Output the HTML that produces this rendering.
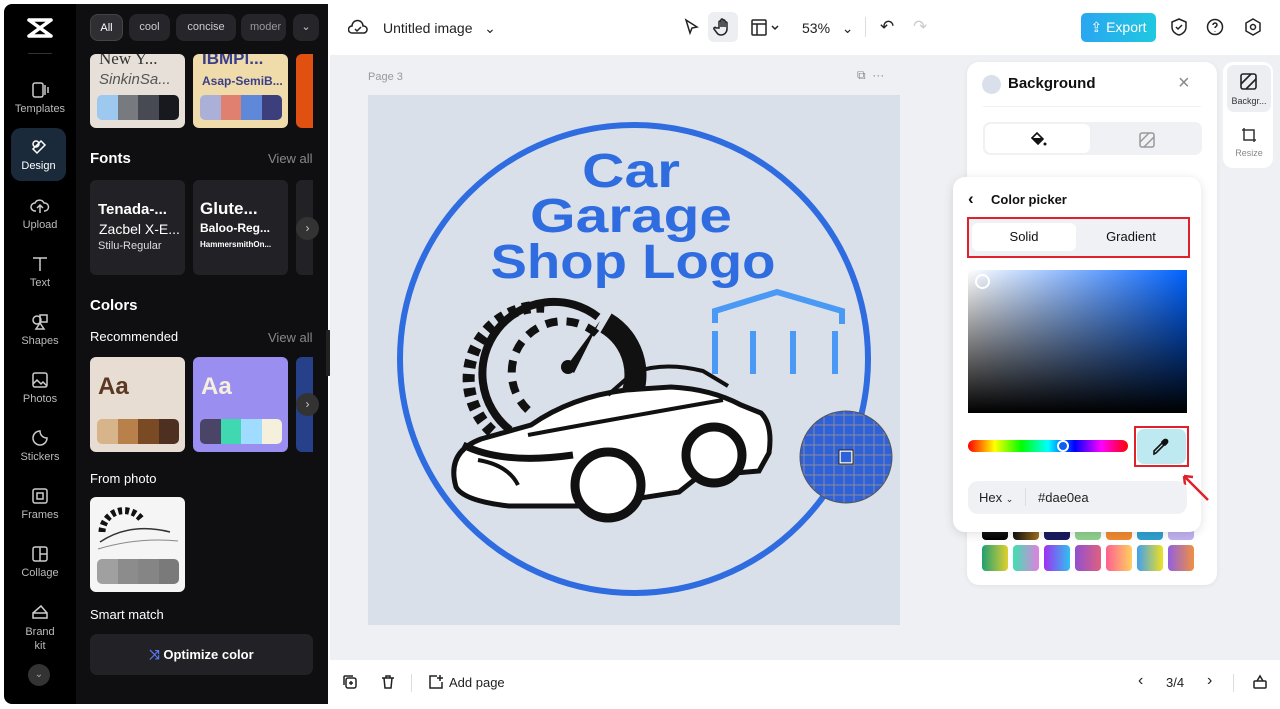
<!DOCTYPE html>
<html><head><meta charset="utf-8"><style>
*{box-sizing:border-box;margin:0;padding:0}
body{width:1280px;height:709px;overflow:hidden;background:#fff;font-family:"Liberation Sans",sans-serif;position:relative}
.abs{position:absolute;white-space:nowrap}
.rail{left:4px;top:4px;width:72px;height:700px;background:#000;border-radius:8px 0 0 8px}
.panel{left:76px;top:4px;width:252px;height:700px;background:#0f0f11}
.ri{position:absolute;left:0;width:72px;text-align:center;color:#bbb;font-size:11px}
.ri svg{display:block;margin:0 auto 3px}
.chip{position:absolute;top:14px;height:27px;border-radius:8px;background:#26262a;color:#ccc;font-size:11px;line-height:27px;text-align:center;overflow:hidden;white-space:nowrap}
.h{position:absolute;color:#fff;font-weight:bold;font-size:15px}
.va{position:absolute;color:#888;font-size:13px}
.card{position:absolute;border-radius:6px;overflow:hidden;white-space:nowrap}
.sw{position:absolute;height:25px;border-radius:5px;overflow:hidden;display:flex}
.sw i{flex:1}
.top{left:330px;top:0;width:950px;height:55px;background:#fff}
.canvasbg{left:330px;top:55px;width:950px;height:605px;background:#eef0f4}
.bot{left:330px;top:660px;width:950px;height:49px;background:#fff}
</style></head><body>
<div class="abs rail"></div>
<div class="abs panel"></div>
<svg class="abs" style="left:26px;top:17px" width="28" height="22" viewBox="0 0 28 22"><path d="M3 3l22 16M25 3L3 19M3 3h22M3 19h22" stroke="#fff" stroke-width="3.5" fill="none" stroke-linejoin="round" stroke-linecap="round"/></svg>
<div class="abs" style="left:28px;top:53px;width:24px;height:1px;background:#333"></div>
<div class="abs" style="left:4px;top:0;width:72px">
<div class="ri" style="top:80px"><svg width="20" height="20" viewBox="0 0 20 20" fill="none" stroke="#ccc" stroke-width="1.5"><rect x="3" y="3" width="10" height="14" rx="2"/><path d="M15 5v10M18 7v6"/></svg>Templates</div>
<div class="ri" style="top:128px;left:7px;width:55px;height:53px;background:#1b2a3a;border-radius:10px;color:#fff;padding-top:9px"><svg width="20" height="20" viewBox="0 0 20 20" fill="none" stroke="#fff" stroke-width="1.5"><circle cx="7" cy="7" r="3"/><path d="M12 4l4 4-8 8-4-4z"/></svg>Design</div>
<div class="ri" style="top:196px"><svg width="20" height="20" viewBox="0 0 20 20" fill="none" stroke="#ccc" stroke-width="1.5"><path d="M6 15H5a4 4 0 010-8 5 5 0 019 0 4 4 0 011 8h-1M10 17V9M7 12l3-3 3 3"/></svg>Upload</div>
<div class="ri" style="top:254px"><svg width="20" height="20" viewBox="0 0 20 20" fill="none" stroke="#ccc" stroke-width="1.5"><path d="M3 4h14M10 4v13"/></svg>Text</div>
<div class="ri" style="top:312px"><svg width="20" height="20" viewBox="0 0 20 20" fill="none" stroke="#ccc" stroke-width="1.5"><circle cx="7" cy="8" r="4"/><rect x="10" y="3" width="7" height="7"/><path d="M10 11l4 6H6z"/></svg>Shapes</div>
<div class="ri" style="top:370px"><svg width="20" height="20" viewBox="0 0 20 20" fill="none" stroke="#ccc" stroke-width="1.5"><rect x="3" y="3" width="14" height="14" rx="2"/><path d="M3 14l4-4 4 4 2-2 4 4"/></svg>Photos</div>
<div class="ri" style="top:428px"><svg width="20" height="20" viewBox="0 0 20 20" fill="none" stroke="#ccc" stroke-width="1.5"><path d="M17 10a7 7 0 11-7-7c0 4 3 7 7 7z"/></svg>Stickers</div>
<div class="ri" style="top:486px"><svg width="20" height="20" viewBox="0 0 20 20" fill="none" stroke="#ccc" stroke-width="1.5"><rect x="3" y="3" width="14" height="14" rx="2"/><rect x="7" y="7" width="6" height="6"/></svg>Frames</div>
<div class="ri" style="top:544px"><svg width="20" height="20" viewBox="0 0 20 20" fill="none" stroke="#ccc" stroke-width="1.5"><rect x="3" y="3" width="14" height="14" rx="2"/><path d="M10 3v14M10 10h7"/></svg>Collage</div>
<div class="ri" style="top:602px;line-height:14px"><svg width="20" height="20" viewBox="0 0 20 20" fill="none" stroke="#ccc" stroke-width="1.5"><path d="M3 11l8-7 6 7M3 11h14v5H3z"/></svg>Brand<br>kit</div>
<div style="position:absolute;left:24px;top:664px;width:22px;height:22px;border-radius:50%;background:#333;color:#aaa;font-size:10px;text-align:center;line-height:22px">⌄</div>
</div>
<div class="chip" style="left:90px;width:33px;background:#2e2e33;color:#fff;border:1px solid #444">All</div>
<div class="chip" style="left:129px;width:41px">cool</div>
<div class="chip" style="left:176px;width:60px">concise</div>
<div class="chip" style="left:241px;width:45px;text-align:left;padding-left:9px;color:#999">moder</div>
<div class="chip" style="left:293px;width:26px">⌄</div>
<div class="card" style="left:90px;top:54px;width:95px;height:74px;background:#e6e0d8"><div style="position:absolute;left:9px;top:-5px;font-family:'Liberation Serif';font-size:17px;color:#333">New Y...</div><div style="position:absolute;left:9px;top:17px;font-style:italic;font-size:15px;color:#555">SinkinSa...</div></div>
<div class="sw" style="left:97px;top:95px;width:82px"><i style="background:#9dc8f0"></i><i style="background:#777b80"></i><i style="background:#474a52"></i><i style="background:#17191e"></i></div>
<div class="card" style="left:193px;top:54px;width:95px;height:74px;background:#f0dcaa"><div style="position:absolute;left:9px;top:-5px;font-weight:bold;font-size:17px;color:#3a3f8a">IBMPl...</div><div style="position:absolute;left:9px;top:20px;font-weight:bold;font-size:12px;color:#3a3f8a">Asap-SemiB...</div></div>
<div class="sw" style="left:200px;top:95px;width:82px"><i style="background:#aab0d8"></i><i style="background:#e08070"></i><i style="background:#6088d8"></i><i style="background:#3c3f7c"></i></div>
<div class="card" style="left:296px;top:54px;width:17px;height:74px;background:#e05010;border-radius:6px 0 0 6px"></div>
<div class="h" style="left:90px;top:150px">Fonts</div><div class="va" style="left:268px;top:151px">View all</div>
<div class="card" style="left:90px;top:180px;width:95px;height:95px;background:#222226;color:#fff"><div style="position:absolute;left:8px;top:21px;font-weight:bold;font-size:15px">Tenada-...</div><div style="position:absolute;left:9px;top:41px;font-size:14px">Zacbel X-E...</div><div style="position:absolute;left:8px;top:60px;font-size:11px;color:#ddd">Stilu-Regular</div></div>
<div class="card" style="left:193px;top:180px;width:95px;height:95px;background:#222226;color:#fff"><div style="position:absolute;left:7px;top:19px;font-weight:bold;font-size:17px">Glute...</div><div style="position:absolute;left:7px;top:41px;font-weight:bold;font-size:12px">Baloo-Reg...</div><div style="position:absolute;left:7px;top:60px;font-size:8px;font-weight:bold">HammersmithOn...</div></div>
<div class="card" style="left:296px;top:180px;width:17px;height:95px;background:#222226;border-radius:6px 0 0 6px"></div>
<div class="abs" style="left:296px;top:217px;width:23px;height:23px;border-radius:50%;background:#333;color:#ccc;font-size:12px;text-align:center;line-height:23px">›</div>
<div class="h" style="left:90px;top:297px">Colors</div>
<div class="abs" style="left:90px;top:329px;color:#fff;font-size:13px">Recommended</div><div class="va" style="left:268px;top:330px">View all</div>
<div class="card" style="left:90px;top:357px;width:95px;height:95px;background:#e8ddd2"><div style="position:absolute;left:8px;top:16px;font-weight:bold;font-size:24px;color:#5a3822">Aa</div></div>
<div class="sw" style="left:97px;top:419px;width:82px"><i style="background:#d8b48a"></i><i style="background:#b8804a"></i><i style="background:#7a4a24"></i><i style="background:#4e3020"></i></div>
<div class="card" style="left:193px;top:357px;width:95px;height:95px;background:#9a8ef0"><div style="position:absolute;left:8px;top:16px;font-weight:bold;font-size:24px;color:#f5f0dc">Aa</div></div>
<div class="sw" style="left:200px;top:419px;width:82px"><i style="background:#4a4466"></i><i style="background:#40d8b0"></i><i style="background:#a0dcff"></i><i style="background:#f5f0dc"></i></div>
<div class="card" style="left:296px;top:357px;width:17px;height:95px;background:#26408a;border-radius:6px 0 0 6px"></div>
<div class="abs" style="left:296px;top:393px;width:23px;height:23px;border-radius:50%;background:#333;color:#ccc;font-size:12px;text-align:center;line-height:23px">›</div>
<div class="abs" style="left:90px;top:471px;color:#fff;font-size:13px">From photo</div>
<div class="card" style="left:90px;top:497px;width:95px;height:95px;background:#f5f5f5"><svg width="95" height="60" viewBox="0 0 95 60"><path d="M12 35a22 22 0 0140-12" stroke="#111" stroke-width="7" fill="none" stroke-dasharray="4 3"/><path d="M10 45q30-20 70-10" stroke="#333" stroke-width="1.5" fill="none"/><path d="M8 52q40-12 80-8" stroke="#888" stroke-width="1" fill="none"/></svg></div>
<div class="sw" style="left:97px;top:559px;width:82px"><i style="background:#a0a0a0"></i><i style="background:#8c8c8c"></i><i style="background:#858585"></i><i style="background:#7a7a7a"></i></div>
<div class="abs" style="left:90px;top:607px;color:#fff;font-size:13px">Smart match</div>
<div class="abs" style="left:90px;top:634px;width:223px;height:41px;background:#222226;border-radius:7px;color:#fff;font-size:13px;text-align:center;line-height:41px;font-weight:bold"><span style="color:#5a7af0">⤨</span> Optimize color</div>
<div class="abs" style="left:326px;top:330px;width:8px;height:46px;background:#222;border-radius:0 5px 5px 0"></div>
<div class="abs" style="left:0;top:704px;width:330px;height:5px;background:#fff"></div>

<div class="abs top"></div>
<svg class="abs" style="left:348px;top:18px" width="20" height="18" viewBox="0 0 20 18" fill="none" stroke="#222" stroke-width="1.5"><path d="M5 15H4a3.5 3.5 0 010-7 5.5 5.5 0 0111 0 3.5 3.5 0 011 7z"/><path d="M7 11l2 2 4-4"/></svg>
<div class="abs" style="left:383px;top:20px;font-size:14px;color:#222">Untitled image &nbsp;&nbsp;⌄</div>
<svg class="abs" style="left:682px;top:18px" width="18" height="18" viewBox="0 0 18 18" fill="none" stroke="#222" stroke-width="1.5"><path d="M4 2l11 7-5 1-2 5z"/></svg>
<div class="abs" style="left:708px;top:12px;width:30px;height:30px;background:#eceef1;border-radius:6px"></div>
<svg class="abs" style="left:713px;top:17px" width="20" height="20" viewBox="0 0 20 20" fill="none" stroke="#222" stroke-width="1.5"><path d="M6 11V5a1 1 0 012 0v5V3a1 1 0 012 0v7V4a1 1 0 012 0v6V6a1 1 0 012 0v6a6 6 0 01-6 6 5 5 0 01-4-2l-3-4a1 1 0 012-1z"/></svg>
<svg class="abs" style="left:751px;top:19px" width="30" height="18" viewBox="0 0 30 18" fill="none" stroke="#222" stroke-width="1.5"><rect x="1" y="1" width="14" height="15" rx="1"/><path d="M1 5h14M6 5v11M21 7l3 3 3-3"/></svg>
<div class="abs" style="left:802px;top:20px;font-size:14px;color:#222">53% &nbsp;&nbsp;⌄</div>
<div class="abs" style="left:865px;top:17px;width:1px;height:20px;background:#ddd"></div>
<div class="abs" style="left:880px;top:17px;font-size:17px;color:#222">↶</div>
<div class="abs" style="left:913px;top:17px;font-size:17px;color:#ccc">↷</div>
<div class="abs" style="left:1081px;top:13px;width:75px;height:29px;border-radius:5px;background:linear-gradient(90deg,#2aa6f0,#1fc8e0);color:#fff;font-size:14px;line-height:29px;text-align:center">⇪ Export</div>
<svg class="abs" style="left:1170px;top:18px" width="18" height="18" viewBox="0 0 18 18" fill="none" stroke="#222" stroke-width="1.5"><path d="M9 1l7 3v5c0 4-3 7-7 8-4-1-7-4-7-8V4z"/><path d="M6 9l2 2 4-4"/></svg>
<svg class="abs" style="left:1206px;top:18px" width="18" height="18" viewBox="0 0 18 18" fill="none" stroke="#222" stroke-width="1.5"><circle cx="9" cy="9" r="7.5"/><path d="M7 7a2 2 0 114 0c0 1.5-2 1.5-2 3M9 13v.5"/></svg>
<svg class="abs" style="left:1244px;top:18px" width="18" height="18" viewBox="0 0 18 18" fill="none" stroke="#222" stroke-width="1.5"><path d="M9 1l7 4v8l-7 4-7-4V5z"/><circle cx="9" cy="9" r="2.5"/></svg>

<div class="abs canvasbg"></div>
<div class="abs" style="left:368px;top:71px;font-size:11px;color:#999">Page 3</div>
<div class="abs" style="left:857px;top:68px;font-size:12px;color:#888">⧉ &nbsp;···</div>
<div class="abs" style="left:368px;top:95px;width:532px;height:530px;background:#dae0ea"></div>
<svg class="abs" style="left:368px;top:95px" width="532" height="530" viewBox="0 0 532 530">
<circle cx="266" cy="264" r="234" fill="none" stroke="#2f6ce0" stroke-width="6"/>
<g font-family="Liberation Sans" font-weight="bold" fill="#2f6ce0" text-anchor="middle">
<text x="263" y="92" font-size="48" textLength="98" lengthAdjust="spacingAndGlyphs">Car</text>
<text x="263" y="137" font-size="48" textLength="202" lengthAdjust="spacingAndGlyphs">Garage</text>
<text x="265" y="183" font-size="48" textLength="285" lengthAdjust="spacingAndGlyphs">Shop Logo</text>
</g>
<g fill="none" stroke="#4a9af5" stroke-width="6"><path d="M347 228V216l62-19 65 19v13"/><path d="M347 236v43M385 236v43M425 236v43M467 236v43"/></g>
<!-- gear -->
<path d="M135 345A72 72 0 0 1 180 212" fill="none" stroke="#111" stroke-width="12" stroke-dasharray="8 6"/>
<path d="M142 335A62 62 0 0 1 230 222" fill="none" stroke="#111" stroke-width="8"/>
<path d="M160 315A48 48 0 0 1 230 240" fill="none" stroke="#111" stroke-width="8" stroke-dasharray="12 9"/>
<path d="M238 228A60 60 0 0 1 258 312" fill="none" stroke="#111" stroke-width="22"/>
<path d="M198 272l34-46-26 52z" fill="#111"/><circle cx="200" cy="272" r="7" fill="#111"/>
<!-- car -->
<path d="M88 392q-10-35 25-48l50-14q40-28 95-35l45-3q40 2 70 18l20 8q12 12 8 40l-10 18-60 5-20 16-90 14-80 0q-45-5-53-19z" fill="#fff" stroke="#111" stroke-width="5"/>
<path d="M160 340q80-15 195-35" stroke="#111" stroke-width="4" fill="none"/>
<path d="M240 300l25-22q30-12 70-2l25 15" stroke="#111" stroke-width="4" fill="none"/>
<path d="M95 350q40 20 110 10" stroke="#111" stroke-width="7" fill="none"/>
<circle cx="240" cy="390" r="33" fill="#fff" stroke="#111" stroke-width="9"/>
<circle cx="346" cy="360" r="28" fill="#fff" stroke="#111" stroke-width="9"/>
<path d="M110 365q30 5 40 25" stroke="#111" stroke-width="4" fill="none"/>
</svg>
<svg class="abs" style="left:799px;top:410px" width="94" height="94" viewBox="0 0 94 94"><defs><clipPath id="c"><circle cx="47" cy="47" r="46"/></clipPath></defs><circle cx="47" cy="47" r="46" fill="#2f62d8"/><g clip-path="url(#c)" stroke="#8a8a9a" stroke-width="1"><path d="M5 0v94M15 0v94M25 0v94M35 0v94M45 0v94M55 0v94M65 0v94M75 0v94M85 0v94M0 5h94M0 15h94M0 25h94M0 35h94M0 45h94M0 55h94M0 65h94M0 75h94M0 85h94"/></g><circle cx="47" cy="47" r="46" fill="none" stroke="#555"/><rect x="41" y="41" width="12" height="12" fill="#2f62d8" stroke="#fff" stroke-width="1.5"/><rect x="40" y="40" width="14" height="14" fill="none" stroke="#222"/></svg>

<div class="abs" style="left:1223px;top:62px;width:50px;height:106px;background:#fff;border-radius:10px"></div>
<div class="abs" style="left:1227px;top:65px;width:44px;height:47px;background:#eceef1;border-radius:7px"></div>
<svg class="abs" style="left:1240px;top:73px" width="17" height="17" viewBox="0 0 17 17" fill="none" stroke="#222" stroke-width="1.6"><rect x="1" y="1" width="15" height="15" rx="2"/><path d="M1 11L11 1M6 16L16 6"/></svg>
<div class="abs" style="left:1227px;top:96px;width:44px;text-align:center;font-size:9px;color:#333">Backgr...</div>
<svg class="abs" style="left:1241px;top:127px" width="16" height="16" viewBox="0 0 16 16" fill="none" stroke="#333" stroke-width="1.5"><path d="M3 1v12h12M1 3h12v12"/></svg>
<div class="abs" style="left:1227px;top:148px;width:44px;text-align:center;font-size:9px;color:#888">Resize</div>

<div class="abs" style="left:967px;top:62px;width:250px;height:523px;background:#fff;border-radius:12px;box-shadow:0 1px 6px rgba(0,0,0,.06)"></div>
<div class="abs" style="left:982px;top:75px;width:19px;height:19px;border-radius:50%;background:#dae0ea"></div>
<div class="abs" style="left:1008px;top:75px;font-size:15px;font-weight:bold;color:#111">Background</div>
<div class="abs" style="left:1178px;top:72px;font-size:20px;color:#888">×</div>
<div class="abs" style="left:983px;top:106px;width:218px;height:1px;background:#f0f0f0"></div>
<div class="abs" style="left:983px;top:122px;width:219px;height:33px;background:#f0f1f4;border-radius:7px"></div>
<div class="abs" style="left:985px;top:124px;width:105px;height:29px;background:#fff;border-radius:6px"></div>
<svg class="abs" style="left:1029px;top:131px" width="18" height="16" viewBox="0 0 18 16"><path d="M3 7l5-5 6 6-5 5z" fill="none" stroke="#111" stroke-width="1.6"/><path d="M3 7h11l-5 5z" fill="#111"/><circle cx="16" cy="13" r="1.5" fill="#111"/></svg>
<svg class="abs" style="left:1139px;top:132px" width="16" height="16" viewBox="0 0 16 16" fill="none" stroke="#999" stroke-width="1.5"><rect x="1" y="1" width="14" height="14" rx="2"/><path d="M1 10L10 1M5 15L15 5"/></svg>
<div class="abs" style="left:982px;top:520px;display:flex;gap:5px">
<i style="width:26px;height:20px;border-radius:4px;background:linear-gradient(#333,#000)"></i><i style="width:26px;height:20px;border-radius:4px;background:linear-gradient(90deg,#111,#a07020)"></i><i style="width:26px;height:20px;border-radius:4px;background:#1a1a60"></i><i style="width:26px;height:20px;border-radius:4px;background:#90d090"></i><i style="width:26px;height:20px;border-radius:4px;background:#f08a30"></i><i style="width:26px;height:20px;border-radius:4px;background:#30a0d0"></i><i style="width:26px;height:20px;border-radius:4px;background:#c0b0f0"></i></div>
<div class="abs" style="left:982px;top:545px;display:flex;gap:5px">
<i style="width:26px;height:26px;border-radius:4px;background:linear-gradient(90deg,#20a070,#e0d030)"></i><i style="width:26px;height:26px;border-radius:4px;background:linear-gradient(90deg,#40e0b0,#e080e0)"></i><i style="width:26px;height:26px;border-radius:4px;background:linear-gradient(90deg,#a030f0,#30c0f0)"></i><i style="width:26px;height:26px;border-radius:4px;background:linear-gradient(90deg,#9050d0,#e06080)"></i><i style="width:26px;height:26px;border-radius:4px;background:linear-gradient(90deg,#ff6090,#ffd060)"></i><i style="width:26px;height:26px;border-radius:4px;background:linear-gradient(90deg,#40a0f0,#f0e020)"></i><i style="width:26px;height:26px;border-radius:4px;background:linear-gradient(90deg,#9060e0,#f09040)"></i></div>

<div class="abs" style="left:953px;top:177px;width:248px;height:355px;background:#fff;border-radius:12px;box-shadow:0 2px 10px rgba(0,0,0,.12)"></div>
<div class="abs" style="left:968px;top:189px;font-size:17px;color:#111;font-weight:bold">‹</div>
<div class="abs" style="left:991px;top:192px;font-size:13px;font-weight:bold;color:#111">Color picker</div>
<div class="abs" style="left:968px;top:219px;width:220px;height:38px;background:#f0f1f4"></div>
<div class="abs" style="left:972px;top:223px;width:104px;height:28px;background:#fff;border-radius:6px;text-align:center;line-height:28px;font-size:13px;color:#111">Solid</div>
<div class="abs" style="left:1078px;top:223px;width:106px;height:28px;text-align:center;line-height:28px;font-size:13px;color:#111">Gradient</div>
<div class="abs" style="left:967px;top:217px;width:223px;height:41px;border:2px solid #e0202a"></div>
<div class="abs" style="left:968px;top:270px;width:219px;height:143px;background:linear-gradient(to top,#000,rgba(0,0,0,0)),linear-gradient(to right,#fff,#0062ff)"></div>
<div class="abs" style="left:975px;top:274px;width:15px;height:15px;border-radius:50%;border:2px solid #fff"></div>
<div class="abs" style="left:968px;top:440px;width:160px;height:12px;border-radius:6px;background:linear-gradient(90deg,#f00,#ff0,#0f0,#0ff,#00f,#f0f,#f00)"></div>
<div class="abs" style="left:1057px;top:440px;width:12px;height:12px;border-radius:50%;border:2px solid #fff;background:#1060f0"></div>
<div class="abs" style="left:1134px;top:426px;width:55px;height:41px;border:2px solid #e0202a"></div>
<div class="abs" style="left:1137px;top:429px;width:49px;height:35px;background:#bfe9f0;border-radius:7px"></div>
<svg class="abs" style="left:1152px;top:438px" width="18" height="18" viewBox="0 0 18 18" fill="none" stroke="#111" stroke-width="1.6"><path d="M2 16l2-1 8-8-2-2-8 8z"/><path d="M10 4l2-2a1.5 1.5 0 013 3l-2 2z" fill="#111"/></svg>
<svg class="abs" style="left:1180px;top:470px" width="30" height="32" viewBox="0 0 30 32"><path d="M28 30L4 6M4 6l1 9M4 6l9 1" stroke="#e0202a" stroke-width="2.5" fill="none"/></svg>
<div class="abs" style="left:968px;top:481px;width:219px;height:33px;background:#f0f1f4;border-radius:10px"></div>
<div class="abs" style="left:979px;top:490px;font-size:13px;color:#222">Hex <span style="font-size:9px">⌄</span></div>
<div class="abs" style="left:1025px;top:488px;width:1px;height:18px;background:#ddd"></div>
<div class="abs" style="left:1038px;top:490px;font-size:13px;color:#222">#dae0ea</div>

<div class="abs bot"></div>
<svg class="abs" style="left:342px;top:674px" width="16" height="16" viewBox="0 0 16 16" fill="none" stroke="#222" stroke-width="1.5"><rect x="4" y="4" width="10" height="10" rx="2"/><path d="M2 11V3a1 1 0 011-1h8M9 7v4M7 9h4"/></svg>
<svg class="abs" style="left:380px;top:674px" width="16" height="16" viewBox="0 0 16 16" fill="none" stroke="#222" stroke-width="1.5"><path d="M2 4h12M6 4V2h4v2M4 4l1 10h6l1-10"/></svg>
<div class="abs" style="left:411px;top:674px;width:1px;height:18px;background:#ddd"></div>
<svg class="abs" style="left:428px;top:674px" width="16" height="16" viewBox="0 0 16 16" fill="none" stroke="#222" stroke-width="1.5"><path d="M14 8v6H2V2h7M12 1v6M9 4h6"/></svg>
<div class="abs" style="left:449px;top:675px;font-size:13px;color:#222">Add page</div>
<div class="abs" style="left:1138px;top:672px;font-size:16px;color:#222">‹</div>
<div class="abs" style="left:1166px;top:675px;font-size:13px;color:#222">3/4</div>
<div class="abs" style="left:1207px;top:672px;font-size:16px;color:#222">›</div>
<div class="abs" style="left:1233px;top:674px;width:1px;height:18px;background:#ddd"></div>
<svg class="abs" style="left:1252px;top:674px" width="16" height="16" viewBox="0 0 16 16" fill="none" stroke="#222" stroke-width="1.5"><rect x="2" y="7" width="12" height="7" rx="1"/><path d="M5 7l3-5 3 5"/></svg>
</body></html>
